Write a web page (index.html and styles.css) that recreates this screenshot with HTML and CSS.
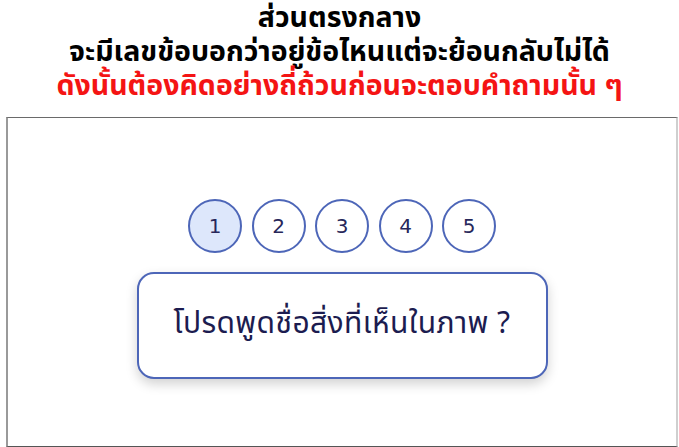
FILE: index.html
```
<!DOCTYPE html>
<html lang="th">
<head>
<meta charset="utf-8">
<title>Quiz</title>
<link rel="stylesheet" href="styles.css">
</head>
<body>
<header class="heading">
  <div class="line">ส่วนตรงกลาง</div>
  <div class="line">จะมีเลขข้อบอกว่าอยู่ข้อไหนแต่จะย้อนกลับไม่ได้</div>
  <div class="line red">ดังนั้นต้องคิดอย่างถี่ถ้วนก่อนจะตอบคำถามนั้น ๆ</div>
</header>
<main class="frame">
  <div class="steps">
    <div class="step active">1</div>
    <div class="step">2</div>
    <div class="step">3</div>
    <div class="step">4</div>
    <div class="step">5</div>
  </div>
  <div class="card">โปรดพูดชื่อสิ่งที่เห็นในภาพ ?</div>
</main>
</body>
</html>
```
FILE: styles.css
```
html, body {
  margin: 0;
  padding: 0;
  background: #ffffff;
}
body {
  width: 679px;
  height: 447px;
  overflow: hidden;
  font-family: "Noto Sans Thai", "Noto Sans", "DejaVu Sans", sans-serif;
}
.heading {
  text-align: center;
  font-weight: 700;
  font-size: 28.5px;
  line-height: 34px;
  color: #000;
  padding-top: 2px;
  height: 117px;
  box-sizing: border-box;
}
.red {
  color: #f41414;
}
.frame {
  margin-left: 6px;
  width: 672px;
  height: 330px;
  box-sizing: border-box;
  border-top: 1px solid #6a6a6a;
  border-left: 2px solid #9a9a9a;
  border-right: 2px solid #cfcfcf;
  border-bottom: 1px solid #555;
  display: flex;
  flex-direction: column;
  align-items: center;
  padding-top: 81px;
}
.steps {
  display: flex;
  gap: 9.5px;
}
.step {
  width: 54px;
  height: 54px;
  box-sizing: border-box;
  border: 2.5px solid #4d66b8;
  border-radius: 50%;
  display: flex;
  align-items: center;
  justify-content: center;
  font-family: "DejaVu Sans", sans-serif;
  font-size: 20px;
  color: #27275a;
  background: #fff;
}
.step.active {
  background: #dde7fb;
}
.card {
  margin-top: 19px;
  width: 411px;
  height: 107px;
  box-sizing: border-box;
  border: 2px solid #4d66b8;
  border-radius: 17px;
  box-shadow: 0 5px 12px rgba(0, 0, 0, 0.18);
  display: flex;
  align-items: center;
  justify-content: center;
  padding-bottom: 4px;
  font-size: 30px;
  letter-spacing: 0.4px;
  color: #1c1c50;
  background: #fff;
}
```
